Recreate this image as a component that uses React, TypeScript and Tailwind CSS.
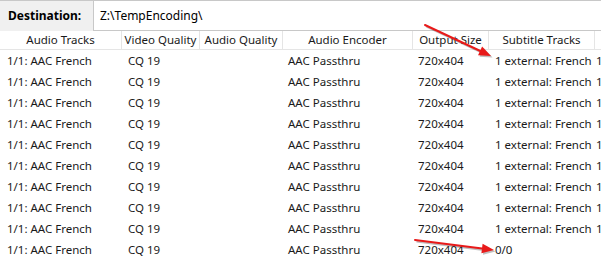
import React from 'react';

const cols = [
  { title: 'Audio Tracks', w: 'w-[122px]' },
  { title: 'Video Quality', w: 'w-[78px]' },
  { title: 'Audio Quality', w: 'w-[83px]' },
  { title: 'Audio Encoder', w: 'w-[130px]' },
  { title: 'Output Size', w: 'w-[76px]' },
  { title: 'Subtitle Tracks', w: 'w-[106px]' },
  { title: '', w: 'w-[80px]' },
];

const rows = Array.from({ length: 10 }, (_, i) => ({
  audio: '1/1: AAC French',
  quality: 'CQ 19',
  aq: '',
  encoder: 'AAC Passthru',
  size: '720x404',
  subs: i === 9 ? '0/0' : '1 external: French',
  extra: i === 9 ? '' : '1',
}));

function Arrow({ x1, y1, x2, y2 }: { x1: number; y1: number; x2: number; y2: number }) {
  const a = Math.atan2(y2 - y1, x2 - x1);
  const len = 13;
  const spread = 0.38;
  const p1 = [x2 - len * Math.cos(a - spread), y2 - len * Math.sin(a - spread)];
  const p2 = [x2 - len * Math.cos(a + spread), y2 - len * Math.sin(a + spread)];
  const bx = x2 - 10 * Math.cos(a);
  const by = y2 - 10 * Math.sin(a);
  return (
    <g>
      <g transform="translate(1.5,1.5)" opacity="0.25">
        <line x1={x1} y1={y1} x2={bx} y2={by} stroke="#000" strokeWidth="2" />
        <polygon points={`${x2},${y2} ${p1[0]},${p1[1]} ${p2[0]},${p2[1]}`} fill="#000" />
      </g>
      <line x1={x1} y1={y1} x2={bx} y2={by} stroke="#e81a1a" strokeWidth="2" strokeLinecap="round" />
      <polygon points={`${x2},${y2} ${p1[0]},${p1[1]} ${p2[0]},${p2[1]}`} fill="#e81a1a" />
    </g>
  );
}

export default function App() {
  return (
    <div className="relative w-[601px] h-[262px] overflow-hidden bg-white text-[11.5px] text-[#1a1a1a] font-['Noto_Sans','Segoe_UI',sans-serif]">
      {/* destination bar */}
      <div className="flex h-[31px] bg-[#f0f0f0] border-t border-[#c8c8c8]">
        <div className="w-[93px] pl-[8px] flex items-center font-bold text-[12px] text-black">Destination:</div>
        <div className="flex-1 bg-white border-l border-b border-[#c8c8c8] flex items-center pl-[6px] text-[12px] text-black">
          Z:\TempEncoding\
        </div>
      </div>

      {/* header */}
      <div className="flex h-[19px] border-b border-[#e5e5e5] whitespace-nowrap">
        {cols.map((c, i) => (
          <div key={i} className={`${c.w} shrink-0 border-r border-[#e5e5e5] flex items-center justify-center leading-none`}>
            {c.title}
          </div>
        ))}
      </div>

      {/* rows */}
      <div className="flex flex-col whitespace-nowrap">
        {rows.map((r, i) => (
          <div key={i} className="flex h-[21px] items-center leading-none">
            <div className="w-[122px] shrink-0 pl-[7px]">{r.audio}</div>
            <div className="w-[78px] shrink-0 pl-[6px]">{r.quality}</div>
            <div className="w-[83px] shrink-0 pl-[5px]">{r.aq}</div>
            <div className="w-[130px] shrink-0 pl-[5px]">{r.encoder}</div>
            <div className="w-[76px] shrink-0 pl-[5px]">{r.size}</div>
            <div className="w-[106px] shrink-0 pl-[6px]">{r.subs}</div>
            <div className="w-[6px] shrink-0 pl-[1px] overflow-hidden">{r.extra}</div>
          </div>
        ))}
      </div>

      {/* annotations */}
      <svg className="absolute left-0 top-0 pointer-events-none" width="601" height="262">
        <Arrow x1={425} y1={25} x2={491} y2={56} />
        <Arrow x1={415} y1={240} x2={494} y2={250} />
      </svg>
    </div>
  );
}
